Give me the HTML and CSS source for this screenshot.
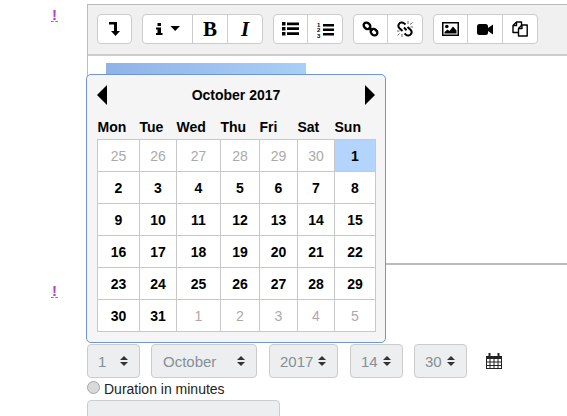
FILE: index.html
```html
<!DOCTYPE html>
<html lang="en">
<head>
  <meta charset="UTF-8" />
  <title>Date picker</title>
  <link rel="stylesheet" href="styles.css">
</head>
<body>

  <div class="field">
    <div class="mark"><span class="mark-bang">!</span></div>
    <div class="editor">
      <div class="toolbar">
        <div class="group">
          <button class="tool"><svg viewBox="0 0 11 14" width="11" height="14"><path d="M0 0h8v9h3l-4.500 5L2 9h3V2.500H0z"/></svg></button>
        </div>
        <div class="group">
          <button class="tool tool-wide"><svg viewBox="0 0 24 12" width="24" height="12"><path d="M1.500 0h3.500v3H1.500zM0 4.500h5V10h1.500v2H0v-2h1.500V6.500H0zM14.500 3h9.500L19.200 8z"/></svg></button>
          <button class="tool tool-b">B</button>
          <button class="tool tool-i">I</button>
        </div>
        <div class="group">
          <button class="tool"><svg viewBox="0 0 17 14" width="17" height="14"><path d="M0 0h3.500v3.500H0zM0 5h3.500v3.500H0zM0 10h3.500v3.500H0zM5 .5h12v2.800H5zM5 5.300h12v2.800H5zM5 10.200h12V13H5z"/></svg></button>
          <button class="tool"><svg viewBox="0 0 17 17" width="17" height="17"><path d="M6 3h11v2.500H6zM6 7.500h11V10H6zM6 12h11v2.500H6z"/><text class="num" x="0" y="5.500">1</text><text class="num" x="0" y="11">2</text><text class="num" x="0" y="16.500">3</text></svg></button>
        </div>
        <div class="group">
          <button class="tool"><svg viewBox="0 0 17 16" width="17" height="16" fill="none" stroke="#000" stroke-width="2.400"><ellipse cx="5" cy="4.800" rx="3.600" ry="2.900" transform="rotate(40 5 4.800)"/><ellipse cx="12" cy="11.200" rx="3.600" ry="2.900" transform="rotate(40 12 11.200)"/><path d="M6.500 6.500l4 3.200"/></svg></button>
          <button class="tool"><svg viewBox="0 0 16 16" width="16" height="16" fill="none"><path stroke="#000" stroke-width="2" d="M8.500 3.500L7 2.300C5.500 1 3 1.500 2 3 1 4.500 1.200 6 2.500 7.300L5.500 10M7 6.500l2.500 2.700M7.500 12.500L9 13.700c1.500 1.300 4 .8 5-.7 1-1.500.8-3-.5-4.300L10.500 6"/><path stroke="#666" stroke-width="1" d="M11 0v3M13 3.500l2.500-2M13.500 6H16M0 10h2.500M2.500 12.500L.5 14.500M5 13v3"/></svg></button>
        </div>
        <div class="group">
          <button class="tool"><svg viewBox="0 0 17 14" width="17" height="14"><path fill-rule="evenodd" d="M0 0h17v14H0zM1.500 1.500v11h14v-11z"/><circle cx="4.800" cy="4.500" r="1.800"/><path d="M2.500 11.500v-1.500l3-2.500 2 1.500 3.500-4.500 3.500 4v3z"/></svg></button>
          <button class="tool"><svg viewBox="0 0 16 11" width="16" height="11"><rect width="11" height="11" rx="2.500"/><path d="M11 4l5-3.500v10L11 7z"/></svg></button>
          <button class="tool"><svg viewBox="0 0 16 16" width="16" height="16" fill="#fff" stroke="#000" stroke-width="1.400" stroke-linejoin="round"><path d="M1 11.500V4.500L4.500 1h5v10.500z"/><path d="M1 4.500h3.500V1" fill="none"/><path d="M6.500 15V7.500L10 4h5.200v11z"/><path d="M6.500 7.500H10V4" fill="none"/></svg></button>
        </div>
      </div>
      <div class="content">
        <div class="selection"></div>
      </div>
    </div>

    <div class="calendar">
      <div class="cal-head">
        <span class="arrow arrow-prev"></span>
        <span class="cal-title">October 2017</span>
        <span class="arrow arrow-next"></span>
      </div>
      <table class="cal-table">
        <thead>
          <tr><th>Mon</th><th>Tue</th><th>Wed</th><th>Thu</th><th>Fri</th><th>Sat</th><th>Sun</th></tr>
        </thead>
        <tbody>
          <tr><td class="off">25</td><td class="off">26</td><td class="off">27</td><td class="off">28</td><td class="off">29</td><td class="off">30</td><td class="selected">1</td></tr>
          <tr><td>2</td><td>3</td><td>4</td><td>5</td><td>6</td><td>7</td><td>8</td></tr>
          <tr><td>9</td><td>10</td><td>11</td><td>12</td><td>13</td><td>14</td><td>15</td></tr>
          <tr><td>16</td><td>17</td><td>18</td><td>19</td><td>20</td><td>21</td><td>22</td></tr>
          <tr><td>23</td><td>24</td><td>25</td><td>26</td><td>27</td><td>28</td><td>29</td></tr>
          <tr><td>30</td><td>31</td><td class="off-warm">1</td><td class="off">2</td><td class="off">3</td><td class="off-warm">4</td><td class="off">5</td></tr>
        </tbody>
      </table>
    </div>
  </div>

  <div class="field field-date">
    <div class="mark"><span class="mark-bang">!</span></div>
    <div class="date-body">
      <div class="date-row">
        <select class="sel sel-short" disabled><option>1</option></select>
        <select class="sel sel-month" disabled><option>October</option></select>
        <select class="sel sel-year" disabled><option>2017</option></select>
        <select class="sel sel-short" disabled><option>14</option></select>
        <select class="sel sel-short" disabled><option>30</option></select>
        <svg class="cal-icon" viewBox="0 0 16 16" width="16" height="16"><path fill="#222" d="M0 3h2.500V0h2v3h7V0h2v3H16v13H0z"/><path fill="#fff" d="M1 6h2.500v2.500H1zM4.500 6h3v2.500h-3zM8.500 6h3v2.500h-3zM12.500 6H15v2.500h-2.500zM1 9.500h2.500V12H1zM4.500 9.500h3V12h-3zM8.500 9.500h3V12h-3zM12.500 9.500H15V12h-2.500zM1 13h2.500v2H1zM4.500 13h3v2h-3zM8.500 13h3v2h-3zM12.500 13H15v2h-2.500z"/></svg>
      </div>
      <label class="radio-row"><input type="radio" disabled> Duration in minutes</label>
      <input class="duration" type="text" disabled>
    </div>
  </div>

</body>
</html>
```

FILE: styles.css
```css
html, body {
  height: 100%;
}

body {
  margin: 0;
  overflow: hidden;
  font-family: "Liberation Sans", Arial, sans-serif;
  font-size: 14px;
  color: #222;
  background-color: #fff;
}

.field {
  position: relative;
  display: flex;
  padding-top: 4px;
}

.mark {
  flex: none;
  width: 87px;
  padding-left: 51px;
  box-sizing: border-box;
}

.mark-bang {
  display: block;
  margin-top: 5px;
  width: 7px;
  height: 12px;
  text-align: center;
  font-size: 15px;
  font-weight: bold;
  line-height: 11px;
  color: #b044c4;
  border-bottom: 1px dashed #a060b0;
}

.editor {
  flex: 1;
  height: 261px;
  box-sizing: border-box;
  border: 1px solid #bbb;
  border-width: 1px 0 2px 1px;
}

.toolbar {
  display: flex;
  gap: 10px;
  height: 51px;
  box-sizing: border-box;
  padding: 9px 9px;
  background-color: #f0f0f0;
  border-bottom: 2px solid #ccc;
}

.group {
  display: flex;
  height: 30px;
  box-sizing: border-box;
  background-color: #fff;
  border: 1px solid #ccc;
  border-radius: 4px;
}

.tool {
  display: flex;
  align-items: center;
  justify-content: center;
  width: 35px;
  padding: 0;
  background: none;
  border: none;
  border-left: 1px solid #ccc;
  color: #000;
}

.tool:first-child {
  border-left: none;
  width: 33px;
}

.tool.tool-wide {
  width: 49px;
}

.tool-b, .tool-i {
  font-family: "Liberation Serif", serif;
  font-size: 21px;
  font-weight: bold;
}

.tool-i {
  font-style: italic;
}

.num {
  font-family: "Liberation Sans", sans-serif;
  font-size: 6px;
  font-weight: bold;
}

.content {
  padding: 7px 18px 0;
}

.selection {
  width: 200px;
  height: 11px;
  background: linear-gradient(to right, #8fb3e8, #a9cff6);
}

.calendar {
  position: absolute;
  left: 86px;
  top: 74px;
  width: 300px;
  height: 269px;
  box-sizing: border-box;
  padding: 0 9px 0 10px;
  background-color: #f5f5f5;
  border: 1px solid #6f94d8;
  border-radius: 5px;
}

.cal-head {
  display: flex;
  align-items: center;
  justify-content: space-between;
  height: 40px;
  padding-right: 1px;
}

.cal-title {
  font-size: 14px;
  font-weight: bold;
  color: #000;
}

.arrow {
  width: 0;
  height: 0;
  border-top: 10px solid transparent;
  border-bottom: 10px solid transparent;
}

.arrow-prev {
  border-right: 10px solid #000;
}

.arrow-next {
  border-left: 10px solid #000;
}

.cal-table {
  width: 278px;
  table-layout: fixed;
  border-collapse: collapse;
  font-size: 14px;
  color: #000;
}

.cal-table th {
  height: 24px;
  padding: 0;
  text-align: left;
  font-weight: bold;
}

.cal-table th:nth-child(1) { width: 42px; }
.cal-table th:nth-child(2) { width: 37px; }
.cal-table th:nth-child(3) { width: 44px; }
.cal-table th:nth-child(4) { width: 39px; }
.cal-table th:nth-child(5) { width: 38px; }
.cal-table th:nth-child(6) { width: 37px; }
.cal-table th:nth-child(7) { width: 41px; }

.cal-table td {
  height: 31px;
  padding: 0;
  text-align: center;
  font-weight: bold;
  background-color: #fff;
  border: 1px solid #c8c8c8;
}

.cal-table td.off,
.cal-table td.off-warm {
  font-weight: normal;
  color: #aaa;
}

.cal-table td.off-warm {
  color: #b5a5a5;
}

.cal-table td.selected {
  background-color: #b3d4fc;
}

.field-date {
  padding-top: 15px;
}

.date-body {
  padding-top: 64px;
}

.date-row {
  display: flex;
  align-items: center;
  gap: 11px;
}

.sel {
  height: 34px;
  margin: 0;
  padding: 0 0 0 10px;
  appearance: none;
  font-family: inherit;
  font-size: 15px;
  color: #868e96;
  opacity: 1;
  background: #eceeef url("data:image/svg+xml,%3Csvg xmlns='http://www.w3.org/2000/svg' width='8' height='10'%3E%3Cpath fill='%23333' d='M4 0l4 4H0zM4 10L0 6h8z'/%3E%3C/svg%3E") no-repeat right 11px center;
  border: 1px solid #ccc;
  border-radius: 4px;
}

.sel-short {
  width: 53px;
}

.sel-month {
  width: 106px;
  padding-left: 11px;
}

.sel-year {
  width: 69px;
  margin: 0 1px;
}

.cal-icon {
  margin: -1px 0 0 8px;
}

.radio-row {
  display: flex;
  align-items: center;
  gap: 4px;
  height: 20px;
  margin-top: 1px;
  font-size: 14px;
}

.radio-row input {
  width: 13px;
  height: 13px;
  margin: 0 0 3px;
  appearance: none;
  background-color: #d9d9d9;
  border: 1px solid #a5a5a5;
  border-radius: 50%;
}

.duration {
  display: block;
  width: 193px;
  height: 34px;
  margin-top: 1px;
  box-sizing: border-box;
  background-color: #eceeef;
  border: 1px solid #ccc;
  border-radius: 4px;
}
```
